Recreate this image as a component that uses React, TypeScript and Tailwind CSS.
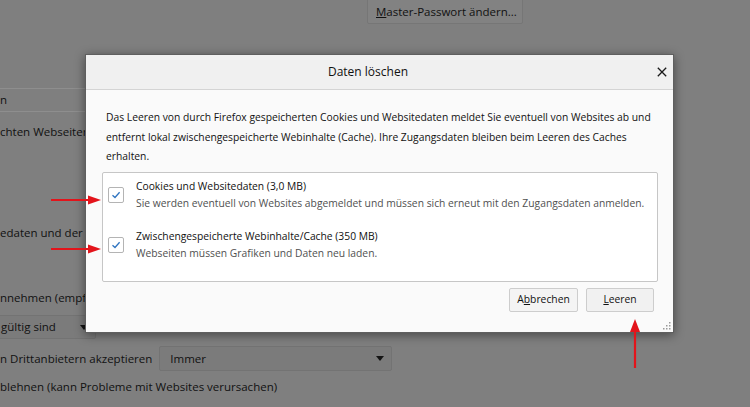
const items = [
    {
        label: 'Cookies und Websitedaten (3,0 MB)',
        description: 'Sie werden eventuell von Websites abgemeldet und müssen sich erneut mit den Zugangsdaten anmelden.',
    },
    {
        label: 'Zwischengespeicherte Webinhalte/Cache (350 MB)',
        description: 'Webseiten müssen Grafiken und Daten neu laden.',
    },
]

function Caret() {
    return (
        <svg width="8" height="5" viewBox="0 0 8 5" className="shrink-0">
            <path d="M0 0 L8 0 L4 5 Z" fill="#141414" />
        </svg>
    )
}

function CheckBox() {
    return (
        <div className="flex h-4 w-4 shrink-0 items-center justify-center rounded-[2px] border border-[#b4b4b4] bg-white">
            <svg width="10" height="8" viewBox="0 0 10 8">
                <path d="M1.5 4.2 L4 6.5 L8.6 1.2" fill="none" stroke="#2f74c0" strokeWidth="1.3" />
            </svg>
        </div>
    )
}

function RedArrow({ dir }: { dir: 'right' | 'up' }) {
    if (dir === 'up') {
        return (
            <svg width="14" height="50" viewBox="0 0 14 50">
                <path d="M7 49 L7 11" stroke="#e3141b" strokeWidth="2.2" />
                <path d="M2 13 L7 0 L12 13 Z" fill="#e3141b" />
            </svg>
        )
    }
    return (
        <svg width="50" height="12" viewBox="0 0 50 12">
            <path d="M0 6 L38 6" stroke="#e3141b" strokeWidth="2.2" />
            <path d="M37 1.5 L50 6 L37 10.5 Z" fill="#e3141b" />
        </svg>
    )
}

export default function App() {
    return (
        <div className="relative h-[407px] w-[750px] overflow-hidden bg-[#7f7f7f] font-['Open_Sans'] text-[#111]">
            {/* dimmed preferences page */}
            <div className="flex flex-col text-[11.5px]">
                <div className="flex h-[25px] pl-[367px]">
                    <div className="-mt-px flex h-[25px] w-[156px] items-center rounded-b-[2px] border border-[#767676] bg-[#828282] pl-[8px]">
                        <span><span className="underline">M</span>aster-Passwort ändern...</span>
                    </div>
                </div>

                <div className="-ml-[20px] mt-[63px] flex h-[24px] w-[400px] items-center border-y border-[#8e8e8e] pl-[20px]">n</div>

                <div className="mt-[10px] flex h-[20px] items-center">chten Webseiten</div>

                <div className="mt-[80px] flex h-[22px] items-center gap-[3px]">
                    <span>edaten und der</span>
                    <div className="h-[22px] w-[60px] rounded-[2px] border border-[#8e8e8e] bg-[#838383]" />
                </div>

                <div className="mt-[44px] flex h-[20px] items-center">nnehmen (empfohlen)</div>

                <div className="-ml-[10px] mt-[7px] flex h-[24px] w-[106px] items-center justify-between rounded-[2px] border border-[#737373] bg-[#7b7b7b] pl-[10px] pr-[7px]">
                    <span>gültig sind</span>
                    <Caret />
                </div>

                <div className="mt-[7px] flex h-[25px] items-center gap-[7px]">
                    <span>n Drittanbietern akzeptieren</span>
                    <div className="flex h-[25px] w-[233px] items-center justify-between rounded-[2px] border border-[#737373] bg-[#7b7b7b] pl-[10px] pr-[7px]">
                        <span>Immer</span>
                        <Caret />
                    </div>
                </div>

                <div className="mt-[6px] flex h-[20px] items-center">blehnen (kann Probleme mit Websites verursachen)</div>
            </div>

            {/* dialog */}
            <div className="absolute left-[85px] top-[54px] flex h-[279px] w-[589px] flex-col border border-[#5f5f5f] bg-[#fafafa] shadow-[0_2px_10px_rgba(0,0,0,0.45)]">
                <div className="flex h-[35px] shrink-0 items-center border-b border-[#d4d4d4] bg-[#f0f0f0]">
                    <div className="flex-1 text-center text-[12px] text-[#111]">Daten löschen</div>
                    <div className="flex w-[23px] items-center justify-center">
                        <svg width="10" height="10" viewBox="0 0 10 10">
                            <path d="M0.8 0.8 L9.2 9.2 M9.2 0.8 L0.8 9.2" stroke="#1a1a1a" strokeWidth="1.3" />
                        </svg>
                    </div>
                </div>

                <div className="flex flex-1 flex-col pl-[16px] pr-[15px] text-[10.3px]">
                    <p className="pl-[4px] pt-[18px] leading-[19.5px] text-[#111]">
                        Das Leeren von durch Firefox gespeicherten Cookies und Websitedaten meldet Sie eventuell von Websites ab und<br />
                        entfernt lokal zwischengespeicherte Webinhalte (Cache). Ihre Zugangsdaten bleiben beim Leeren des Caches<br />
                        erhalten.
                    </p>

                    <div className="mt-[5px] flex h-[110px] flex-col gap-[16px] rounded-[2px] border border-[#c6c6c6] bg-white pl-[5px] pt-[5px]">
                        {items.map((item) => (
                            <div key={item.label} className="flex items-center gap-[12px]">
                                <CheckBox />
                                <div className="flex flex-col leading-[17px]">
                                    <span className="text-[#111]">{item.label}</span>
                                    <span className="text-[#505050]">{item.description}</span>
                                </div>
                            </div>
                        ))}
                    </div>

                    <div className="mt-[6px] flex justify-end gap-[8px] pr-[4px]">
                        <button className="flex h-[24px] w-[69px] items-center justify-center rounded-[2px] border border-[#cdcdcd] bg-[#f4f4f4] text-[#111]">
                            <span>A<span className="underline">b</span>brechen</span>
                        </button>
                        <button className="flex h-[24px] w-[68px] items-center justify-center rounded-[2px] border border-[#cdcdcd] bg-[#f1f1f1] text-[#111]">
                            <span><span className="underline">L</span>eeren</span>
                        </button>
                    </div>
                </div>

                {/* resize grip */}
                <svg className="absolute bottom-[2px] right-[2px]" width="8" height="8" viewBox="0 0 8 8">
                    <g fill="#9a9a9a">
                        <rect x="6" y="0" width="1.5" height="1.5" />
                        <rect x="3" y="3" width="1.5" height="1.5" />
                        <rect x="6" y="3" width="1.5" height="1.5" />
                        <rect x="0" y="6" width="1.5" height="1.5" />
                        <rect x="3" y="6" width="1.5" height="1.5" />
                        <rect x="6" y="6" width="1.5" height="1.5" />
                    </g>
                </svg>
            </div>

            {/* annotation arrows */}
            <div className="absolute left-[51px] top-[194px]"><RedArrow dir="right" /></div>
            <div className="absolute left-[51px] top-[243px]"><RedArrow dir="right" /></div>
            <div className="absolute left-[628px] top-[319px]"><RedArrow dir="up" /></div>
        </div>
    )
}
